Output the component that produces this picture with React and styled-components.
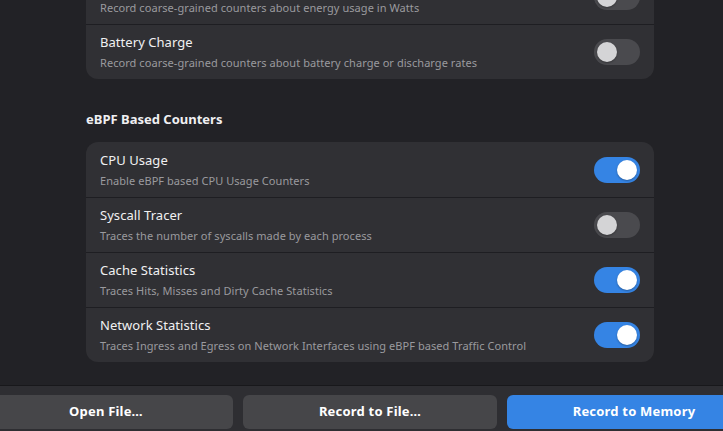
import React from "react";
import styled, { createGlobalStyle } from "styled-components";

const Global = createGlobalStyle`
  html, body { margin: 0; padding: 0; background: #222226; }
  body { font-family: "Noto Sans", "Open Sans", sans-serif; -webkit-font-smoothing: antialiased; }
  * { box-sizing: border-box; }
`;

const Window = styled.div`
  width: 723px;
  height: 431px;
  overflow: hidden;
  background: #222226;
  display: flex;
  flex-direction: column;
`;

const Scroller = styled.div`
  flex: 0 0 385px;
  overflow: hidden;
`;

const Column = styled.div`
  width: 568px;
  margin: -31px 0 0 86px;
  display: flex;
  flex-direction: column;
`;

const Card = styled.div`
  background: #303034;
  border-radius: 12px;
  overflow: hidden;
  display: flex;
  flex-direction: column;
`;

const Row = styled.div`
  height: 55px;
  display: flex;
  align-items: center;
  padding: 0 14px;
  border-top: ${(p) => (p.$first ? "none" : "1px solid #1e1e22")};
`;

const Texts = styled.div`
  flex: 1;
  display: flex;
  flex-direction: column;
  gap: 5px;
`;

const Title = styled.div`
  font-size: 13px;
  line-height: 17px;
  color: #f0f0f2;
  letter-spacing: 0.05px;
`;

const Subtitle = styled.div`
  font-size: 11px;
  line-height: 14px;
  color: #9a9a9e;
  letter-spacing: 0.06px;
`;

const Track = styled.div`
  width: 46px;
  height: 26px;
  border-radius: 13px;
  background: ${(p) => (p.$on ? "#3584e4" : "#4a4a4e")};
  display: flex;
  align-items: center;
  justify-content: ${(p) => (p.$on ? "flex-end" : "flex-start")};
  padding: 0 3px;
  flex: none;
`;

const Knob = styled.div`
  width: 20px;
  height: 20px;
  border-radius: 50%;
  background: ${(p) => (p.$on ? "#ffffff" : "#d4d4d6")};
  box-shadow: 0 1px 2px rgba(0, 0, 0, 0.3);
`;

const Heading = styled.h3`
  margin: 0;
  padding: 32px 0 14px;
  font-size: 13px;
  line-height: 17px;
  font-weight: 700;
  color: #f0f0f2;
`;

const BottomBar = styled.div`
  flex: 1;
  background: #2e2e32;
  border-top: 1px solid #18181b;
  padding-top: 9px;
  overflow: hidden;
`;

const Buttons = styled.div`
  display: flex;
  gap: 10px;
  margin-left: -21px;
`;

const Button = styled.button`
  flex: none;
  width: 254px;
  height: 34px;
  border: none;
  border-radius: 6px;
  background: ${(p) => (p.$accent ? "#3584e4" : "#464649")};
  color: #ffffff;
  font-family: "Noto Sans", "Open Sans", sans-serif;
  font-size: 13px;
  letter-spacing: 0.2px;
  font-weight: 700;
  padding: 0 0 2px;
`;

const Switch = ({ on }) => (
  <Track $on={on}>
    <Knob $on={on} />
  </Track>
);

const SettingRow = ({ title, subtitle, on, first }) => (
  <Row $first={first}>
    <Texts>
      <Title>{title}</Title>
      <Subtitle>{subtitle}</Subtitle>
    </Texts>
    <Switch on={on} />
  </Row>
);

const power = [
  { title: "Energy Usage", subtitle: "Record coarse-grained counters about energy usage in Watts", on: false },
  { title: "Battery Charge", subtitle: "Record coarse-grained counters about battery charge or discharge rates", on: false },
];

const ebpf = [
  { title: "CPU Usage", subtitle: "Enable eBPF based CPU Usage Counters", on: true },
  { title: "Syscall Tracer", subtitle: "Traces the number of syscalls made by each process", on: false },
  { title: "Cache Statistics", subtitle: "Traces Hits, Misses and Dirty Cache Statistics", on: true },
  { title: "Network Statistics", subtitle: "Traces Ingress and Egress on Network Interfaces using eBPF based Traffic Control", on: true },
];

export default function App() {
  return (
    <>
      <Global />
      <Window>
        <Scroller>
          <Column>
            <Card>
              {power.map((r, i) => (
                <SettingRow key={r.title} {...r} first={i === 0} />
              ))}
            </Card>
            <Heading>eBPF Based Counters</Heading>
            <Card>
              {ebpf.map((r, i) => (
                <SettingRow key={r.title} {...r} first={i === 0} />
              ))}
            </Card>
          </Column>
        </Scroller>
        <BottomBar>
          <Buttons>
            <Button>Open File…</Button>
            <Button>Record to File…</Button>
            <Button $accent>Record to Memory</Button>
          </Buttons>
        </BottomBar>
      </Window>
    </>
  );
}
